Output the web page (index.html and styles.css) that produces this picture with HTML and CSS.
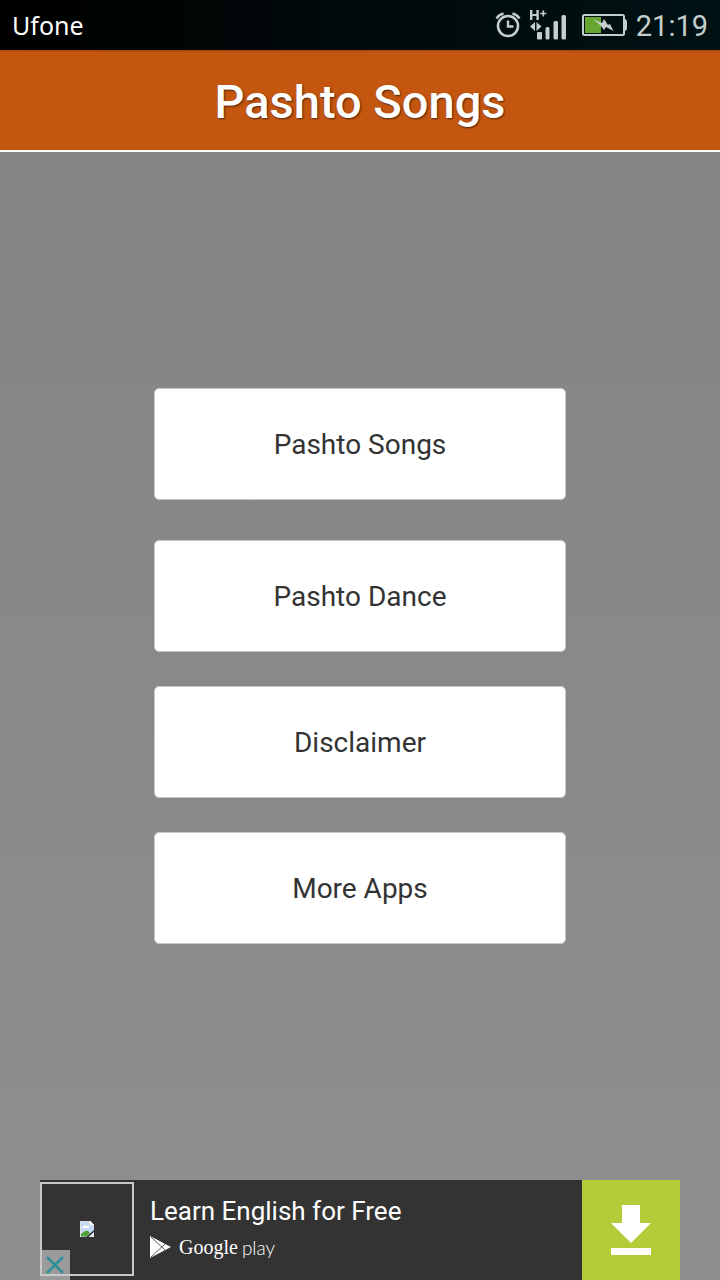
FILE: index.html
```html
<!DOCTYPE html>
<html lang="en">
<head>
    <meta charset="UTF-8">
    <meta name="viewport" content="width=device-width, initial-scale=1.0">
    <title>Pashto Songs</title>
    <link rel="stylesheet" href="styles.css">
</head>
<body>
    <div class="status-bar">
        <span class="carrier">Ufone</span>
        <div class="status-icons">
            <svg class="icon-alarm" width="26" height="28" viewBox="0 0 26 28" fill="none" stroke="currentColor">
                <circle cx="13" cy="15" r="10" stroke-width="2.6"/>
                <path d="M13 9.500v6h5.500" stroke-width="2.4"/>
                <path d="M1.500 7.500Q4 3.500 8.500 2.500M24.500 7.500Q22 3.500 17.500 2.500" stroke-width="2.400"/>
            </svg>
            <svg class="icon-signal" width="37" height="31" viewBox="0 0 37 31" fill="currentColor">
                <path d="M0 0h2.400v4h4V0h2.400v10H6.400V6h-4v4H0zM12.500.500h1.600v2.200h2.200v1.600h-2.200v2.200h-1.600V4.300h-2.200V2.700h2.200z"/>
                <path d="M0 16.500l5-4.500v9zM11.500 16.500l-5-4.500v9z"/>
                <rect x="7" y="22" width="5" height="7.500" rx="1"/>
                <rect x="15.500" y="17" width="4" height="12.500" rx="1.500"/>
                <rect x="23.500" y="11" width="4.500" height="18.500" rx="1.500"/>
                <rect x="31.500" y="5" width="4.500" height="24.500" rx="1.500"/>
            </svg>
            <svg class="icon-battery" width="45" height="22" viewBox="0 0 45 22">
                <rect x="1" y="1" width="41" height="20" rx="1.500" fill="none" stroke="currentColor" stroke-width="2"/>
                <path d="M42 5h1.500l1.500 2v8l-1.500 2H42z" fill="currentColor"/>
                <rect x="3" y="3" width="16" height="16" fill="#67a62f"/>
                <path d="M11 5l9 4 2-4 4 6 2-1 3.500 7L24 13l-2 3-3-4z" fill="currentColor"/>
            </svg>
            <span class="clock">21:19</span>
        </div>
    </div>

    <header class="header">
        <h1>Pashto Songs</h1>
    </header>

    <main class="menu">
        <button class="btn btn-first" type="button">Pashto Songs</button>
        <button class="btn" type="button">Pashto Dance</button>
        <button class="btn" type="button">Disclaimer</button>
        <button class="btn" type="button">More Apps</button>
    </main>

    <aside class="ad">
        <div class="ad-image">
            <svg width="14" height="16" viewBox="0 0 14 16">
                <path d="M0 0h10l4 4v12H0z" fill="#c3d9f5"/>
                <path d="M0 0h10l4 4H9.500V0M.5 0v16" fill="#fff" stroke="#e4e4e4"/>
                <path d="M2 7q0-2 2-2 1-2 3 0 2 0 2 2z" fill="#fff"/>
                <path d="M1 15.500V13q4-4 7-3l2 2-4 3.500z" fill="#4ba135"/>
                <path d="M6 16l8-7v2l-5.500 5z" fill="#333"/>
                <path d="M9 16l5-4.500V16z" fill="#eee"/>
            </svg>
            <button class="ad-close" type="button" aria-label="Close ad">
                <svg width="20" height="20" viewBox="0 0 20 20" fill="none" stroke="#2c8f9c" stroke-width="2.5">
                    <path d="M2 2l16 16M18 2L2 18"/>
                </svg>
            </button>
        </div>
        <div class="ad-body">
            <p class="ad-title">Learn English for Free</p>
            <div class="ad-store">
                <svg width="21" height="22" viewBox="0 0 21 22">
                    <path d="M0 0l21 11L0 22z" fill="#fff"/>
                    <path d="M1 1l14 13M1 21L15 8" fill="none" stroke="#333" stroke-width=".8"/>
                </svg>
                <span class="store-google">Google</span>
                <span class="store-play">play</span>
            </div>
        </div>
        <button class="ad-download" type="button" aria-label="Download">
            <svg width="40" height="50" viewBox="0 0 40 50" fill="#fff">
                <path d="M11 0h18v18h11L20 38 0 18h11zM0 43h40v7H0z"/>
            </svg>
        </button>
    </aside>
</body>
</html>
```
FILE: styles.css
```css
:root {
    --accent-color: #c45610;
    --surface-color: #333333;
    --download-color: #b1cb39;
    --status-color: #c3cdcd;
}

* {
    margin: 0;
    padding: 0;
    box-sizing: border-box;
}

body {
    display: flex;
    flex-direction: column;
    min-height: 100vh;
    font-family: Roboto, sans-serif;
    background: linear-gradient(#828282, #8f8f8f);
}

button {
    border: none;
    font-family: inherit;
    cursor: pointer;
}

svg {
    display: block;
}

.status-bar {
    display: flex;
    justify-content: space-between;
    align-items: center;
    height: 50px;
    padding: 0 12px;
    background: linear-gradient(90deg, #000000, #001214);
    color: var(--status-color);
}

.carrier {
    font-family: "Noto Sans", sans-serif;
    font-size: 25px;
    color: #ffffff;
}

.status-icons {
    display: flex;
    align-items: center;
}

.icon-signal {
    margin: 0 15px 0 9px;
}

.clock {
    margin-left: 9px;
    font-size: 29px;
    line-height: 36px;
    padding-top: 2px;
}

.header {
    height: 102px;
    background-color: var(--accent-color);
    border-bottom: 2px solid #ffffff;
    box-shadow: inset 0 2px 2px -1px rgba(0, 0, 0, 0.2);
    text-align: center;
}

.header h1 {
    font-size: 47px;
    font-weight: 500;
    line-height: 104px;
    color: #ffffff;
    text-shadow: 1px 1px 2px rgba(0, 0, 0, 0.6);
}

.menu {
    flex: 1;
    display: flex;
    flex-direction: column;
    align-items: center;
    justify-content: center;
    gap: 34px;
    padding: 20px;
}

.btn {
    width: 100%;
    max-width: 412px;
    height: 112px;
    background-color: #ffffff;
    border: 1px solid #c8c8c8;
    border-radius: 5px;
    font-size: 28px;
    color: #333333;
}

.btn-first {
    margin-bottom: 6px;
}

.ad {
    display: flex;
    height: 100px;
    margin: 0 40px;
    background-color: var(--surface-color);
}

.ad-image {
    position: relative;
    display: flex;
    align-items: center;
    justify-content: center;
    width: 94px;
    height: 94px;
    margin-top: 2px;
    border: 2px solid #c8c8c8;
}

.ad-close {
    position: absolute;
    left: -2px;
    bottom: -6px;
    display: flex;
    align-items: center;
    justify-content: center;
    width: 30px;
    height: 30px;
    background-color: rgba(200, 200, 200, 0.7);
}

.ad-body {
    flex: 1;
    padding: 15px 16px;
    color: #ffffff;
}

.ad-title {
    font-size: 26px;
    line-height: 32px;
}

.ad-store {
    display: flex;
    align-items: center;
    height: 22px;
    margin-top: 9px;
}

.store-google {
    margin: 0 4px 0 8px;
    font-family: "Liberation Serif", serif;
    font-size: 20px;
}

.store-play {
    font-family: Lato, sans-serif;
    font-size: 19px;
    font-weight: 300;
}

.ad-download {
    display: flex;
    align-items: center;
    justify-content: center;
    width: 98px;
    background-color: var(--download-color);
}
```
